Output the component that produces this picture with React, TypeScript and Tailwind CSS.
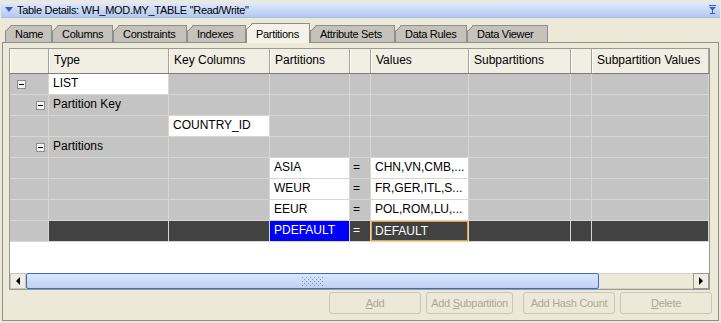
import React from 'react';

type CellKind = 'gray' | 'white' | 'dark' | 'blue' | 'focus';

interface Cell {
  kind: CellKind;
  text?: string;
  tree?: 0 | 1;
}

const colWidths = ['w-[39px]', 'w-[120px]', 'w-[101px]', 'w-[80px]', 'w-[21px]', 'w-[98px]', 'w-[102px]', 'w-[21px]', 'w-[117px]'];
const headers = ['', 'Type', 'Key Columns', 'Partitions', '', 'Values', 'Subpartitions', '', 'Subpartition Values'];

const tabs = [
  { label: 'Name', w: 'w-[47px]' },
  { label: 'Columns', w: 'w-[61px]' },
  { label: 'Constraints', w: 'w-[74px]' },
  { label: 'Indexes', w: 'w-[59px]' },
  { label: 'Partitions', w: 'w-[64px]', active: true },
  { label: 'Attribute Sets', w: 'w-[85px]' },
  { label: 'Data Rules', w: 'w-[72px]' },
  { label: 'Data Viewer', w: 'w-[81px]' },
];

const g = (text?: string): Cell => ({ kind: 'gray', text });
const w = (text: string): Cell => ({ kind: 'white', text });
const d = (text?: string): Cell => ({ kind: 'dark', text });

// partition rows shown in the tree table
const partitionRow = (name: string, values: string): Cell[] => [g(), g(), g(), w(name), g('='), w(values), g(), g(), g()];

const rows: Cell[][] = [
  [{ kind: 'gray', tree: 0 }, w('LIST'), g(), g(), g(), g(), g(), g(), g()],
  [{ kind: 'gray', tree: 1 }, g('Partition Key'), g(), g(), g(), g(), g(), g(), g()],
  [g(), g(), w('COUNTRY_ID'), g(), g(), g(), g(), g(), g()],
  [{ kind: 'gray', tree: 1 }, g('Partitions'), g(), g(), g(), g(), g(), g(), g()],
  partitionRow('ASIA', 'CHN,VN,CMB,...'),
  partitionRow('WEUR', 'FR,GER,ITL,S...'),
  partitionRow('EEUR', 'POL,ROM,LU,...'),
  [g(), d(), d(), { kind: 'blue', text: 'PDEFAULT' }, d('='), { kind: 'focus', text: 'DEFAULT' }, d(), d(), d()],
];

const cellBg: Record<CellKind, string> = {
  gray: 'bg-[#c4c4c4] text-black',
  white: 'bg-white text-black',
  dark: 'bg-[#424242] text-white',
  blue: 'bg-[#0000ff] text-white',
  focus: 'bg-[#424242] text-white',
};

function TreeBox({ level }: { level: 0 | 1 }) {
  return (
    <div className={`flex h-full items-center ${level === 0 ? 'pl-[7px]' : 'pl-[26px]'}`}>
      <div className="flex h-[9px] w-[9px] items-center justify-center border border-[#8a8a8a] bg-[#f4f4f4]">
        <div className="h-px w-[5px] bg-black" />
      </div>
    </div>
  );
}

function Tab({ label, w, active }: { label: string; w: string; active?: boolean }) {
  return (
    <div
      className={`relative ${w} flex-shrink-0 border-l border-r border-t border-[#8e8e8a] pl-[9px] [clip-path:polygon(6px_0,100%_0,100%_100%,0_100%,0_6px)] ${
        active ? 'z-10 -mb-px h-[20px] bg-[#f5f2e9] pt-[2px]' : 'h-[17px] bg-[#c4c2ba]'
      }`}
    >
      <svg className="absolute -left-px -top-px" width="7" height="7" viewBox="0 0 7 7">
        <line x1="0.5" y1="6.5" x2="6.5" y2="0.5" stroke="#8e8e8a" strokeWidth="1" />
      </svg>
      <span className="block pt-[1px] text-[11px] leading-[14px] tracking-[-0.3px] text-black">{label}</span>
    </div>
  );
}

function ActionButton({ label, w, mnemonic }: { label: string; w: string; mnemonic?: number }) {
  return (
    <button
      disabled
      className={`${w} h-[22px] flex-shrink-0 rounded-[3px] border border-[#c9c7ba] text-center text-[11px] tracking-[-0.3px] text-[#aca899]`}
    >
      {mnemonic === undefined ? (
        label
      ) : (
        <>
          {label.slice(0, mnemonic)}
          <span className="underline">{label[mnemonic]}</span>
          {label.slice(mnemonic + 1)}
        </>
      )}
    </button>
  );
}

export default function App() {
  return (
    <div className="flex h-[323px] w-[721px] flex-col overflow-hidden bg-[#ece9d8] pt-[2px] font-['Liberation_Sans',Arial,sans-serif]">
      {/* Title bar */}
      <div className="mx-[1px] flex h-[16px] flex-shrink-0 items-center border-b border-[#a6bde9] bg-gradient-to-b from-[#e3ebfc] to-[#b3c9f2]">
        <svg className="ml-[4px]" width="8" height="5" viewBox="0 0 8 5">
          <polygon points="0,0 8,0 4,5" fill="#2f5fc8" />
        </svg>
        <span className="ml-[4px] text-[11px] leading-[14px] tracking-[-0.3px] text-black">
          Table Details: WH_MOD.MY_TABLE "Read/Write"
        </span>
        <svg className="ml-auto mr-[4px]" width="7" height="9" viewBox="0 0 7 9">
          <rect x="0" y="0" width="7" height="1" fill="#2f5fc8" />
          <polygon points="0,2 7,2 3.5,5.5" fill="#2f5fc8" />
          <rect x="3" y="5" width="1" height="3" fill="#2f5fc8" />
          <rect x="1" y="8" width="5" height="1" fill="#2f5fc8" />
        </svg>
      </div>

      {/* Tabs */}
      <div className="ml-[5px] mt-[4px] flex h-[20px] flex-shrink-0 items-end">
        {tabs.map((t) => (
          <Tab key={t.label} label={t.label} w={t.w} active={t.active} />
        ))}
      </div>

      {/* Tab content */}
      <div className="mx-[2px] mb-[2px] flex flex-1 flex-col border border-[#8e8e8a] pl-[6px] pt-[5px]">
        <div className="flex w-[701px] flex-col border border-[#9a9a94] bg-white">
          {/* Header */}
          <div className="flex h-[25px] border-b border-[#7c7c78]">
            {headers.map((h, i) => (
              <div
                key={i}
                className={`${colWidths[i]} flex-shrink-0 border-l border-r border-l-white border-r-[#a4a39c] bg-[#f1eee4] pl-[4px] text-[12px] leading-[23px] text-black`}
              >
                {h}
              </div>
            ))}
          </div>

          {/* Rows */}
          {rows.map((row, r) => (
            <div key={r} className="flex h-[21px]">
              {row.map((c, i) => (
                <div key={i} className={`${colWidths[i]} flex-shrink-0 border-b border-r border-[#d9d6cf] ${cellBg[c.kind]}`}>
                  {c.tree !== undefined ? (
                    <TreeBox level={c.tree} />
                  ) : c.kind === 'focus' ? (
                    <span className="block h-full whitespace-nowrap border border-[#f2a12c] pl-[3px] text-[12px] leading-[18px]">
                      {c.text}
                    </span>
                  ) : (
                    <span className={`block whitespace-nowrap text-[12px] leading-[19px] ${i === 4 || i === 7 ? 'pl-[3px]' : 'pl-[4px]'}`}>
                      {c.text}
                    </span>
                  )}
                </div>
              ))}
            </div>
          ))}

          {/* Empty area */}
          <div className="h-[31px] bg-white" />

          {/* Horizontal scrollbar */}
          <div className="flex h-[16px] bg-[#ece9d8]">
            <div className="flex w-[16px] flex-shrink-0 items-center justify-center border border-[#c9c6b8] bg-[#efece2]">
              <svg width="4" height="8" viewBox="0 0 4 8">
                <polygon points="4,0 4,8 0,4" fill="#000" />
              </svg>
            </div>
            <div className="flex w-[573px] flex-shrink-0 items-center justify-center rounded-[2px] border border-[#3a6bc9] bg-gradient-to-b from-[#dbe7fb] to-[#bdd2f4]">
              <svg width="22" height="9" viewBox="0 0 22 9">
                {[0, 1, 2, 3, 4].map((y) =>
                  [0, 1, 2, 3, 4, 5, 6, 7, 8, 9, 10].map((x) =>
                    (x + y) % 2 === 0 ? <rect key={`${x}-${y}`} x={x * 2} y={y * 2} width="1" height="1" fill="#6f8fc6" /> : null
                  )
                )}
              </svg>
            </div>
            <div className="w-[94px] flex-shrink-0 border-y border-[#d6d3c6] bg-[#ece9d8]" />
            <div className="flex w-[16px] flex-shrink-0 items-center justify-center border border-[#9a9a94] bg-[#efece2]">
              <svg width="4" height="8" viewBox="0 0 4 8">
                <polygon points="0,0 0,8 4,4" fill="#000" />
              </svg>
            </div>
          </div>
        </div>

        {/* Buttons */}
        <div className="mt-[2px] flex justify-end pr-[6px]">
          <ActionButton label="Add" w="w-[92px]" mnemonic={0} />
          <div className="w-[5px]" />
          <ActionButton label="Add Subpartition" w="w-[87px]" mnemonic={4} />
          <div className="w-[10px]" />
          <ActionButton label="Add Hash Count" w="w-[92px]" />
          <div className="w-[5px]" />
          <ActionButton label="Delete" w="w-[92px]" mnemonic={0} />
        </div>
      </div>
    </div>
  );
}
